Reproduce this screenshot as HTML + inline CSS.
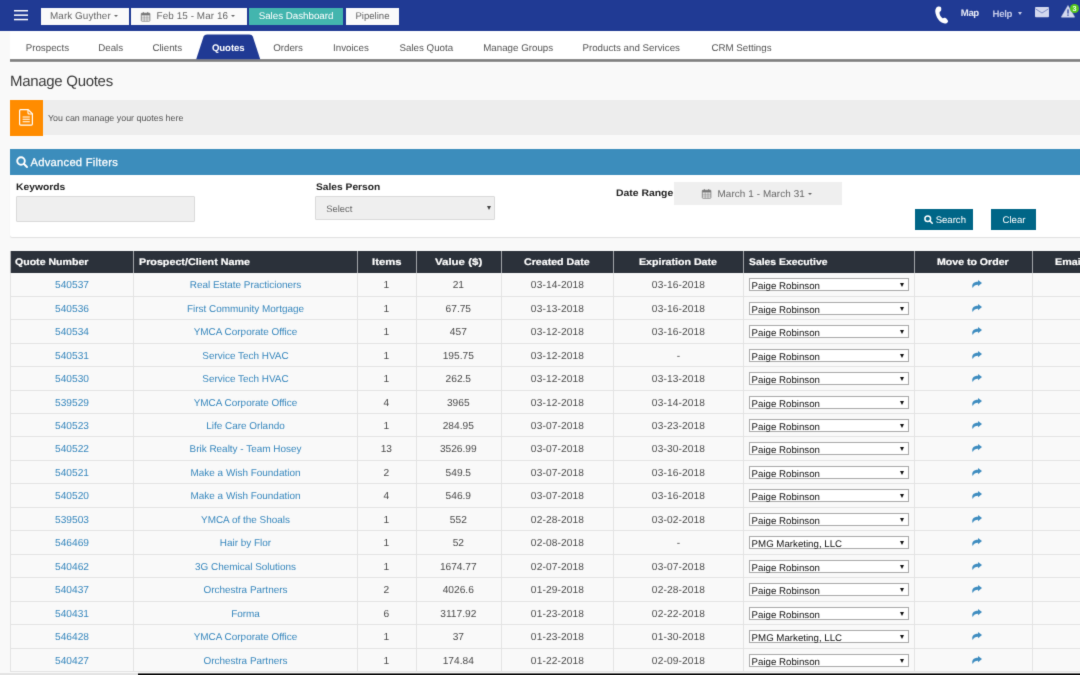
<!DOCTYPE html>
<html><head><meta charset="utf-8"><title>Manage Quotes</title>
<style>
*{box-sizing:border-box;margin:0;padding:0}
html,body{width:1080px;height:675px;overflow:hidden;background:#f9f9f9;font-family:"Liberation Sans",sans-serif;text-rendering:geometricPrecision}
body{position:relative}
.abs{position:absolute}
svg{display:block;overflow:visible}
#topbar{position:absolute;left:0;top:0;width:1080px;height:31px;background:#203a94}
.tb{position:absolute;top:8px;height:16.7px;background:#fafafa;color:#666}
.tt{position:absolute;top:9.2px;height:16.7px;line-height:16.2px;font-size:9.9px;color:#666;white-space:nowrap}
.car{position:absolute;width:0;height:0;border-left:2.7px solid transparent;border-right:2.7px solid transparent;border-top:2.9px solid #666}
#nav{position:absolute;left:10px;top:31px;width:1085px;height:32px;background:#fff}
#navb{position:absolute;left:10px;top:59px;width:1085px;height:3px;background:#808080;border-top:1px solid #8c8c8c;border-bottom:1px solid #969696}
.ni{position:absolute;top:37.8px;height:22px;line-height:22px;font-size:9.75px;color:#555;white-space:nowrap}
h1{position:absolute;left:10px;top:71.9px;font-size:15px;font-weight:normal;color:#3a3a3a;line-height:20px;white-space:nowrap;letter-spacing:-0.3px}
#info{position:absolute;left:42.5px;top:100.2px;width:1050px;height:35.3px;background:#ededed}
#infoic{position:absolute;left:10px;top:100px;width:32.8px;height:35.6px;background:#ff8c00}
#infotx{position:absolute;left:48px;top:110.2px;font-size:8.88px;line-height:16px;color:#555;white-space:nowrap}
#fh{position:absolute;left:10px;top:148.8px;width:1085px;height:26px;background:#3c8dbc}
#fht{position:absolute;left:30.5px;top:154.6px;letter-spacing:0.26px;font-size:11.2px;line-height:16px;color:#fff;white-space:nowrap;-webkit-text-stroke:0.25px #fff}
#fb{position:absolute;left:10px;top:174.5px;width:1085px;height:62.5px;background:#fff;border-radius:0 0 0 2px;box-shadow:0 1px 1px rgba(0,0,0,0.10)}
.lbl{position:absolute;font-weight:bold;font-size:9.6px;color:#222;line-height:12px;white-space:nowrap;transform-origin:0 50%}
.inp{position:absolute;background:#efefef;border:1px solid #dadada;border-radius:1px}
.gt{position:absolute;font-size:9.9px;line-height:12px;color:#666;white-space:nowrap}
.btn{position:absolute;top:208.9px;height:21.2px;background:#006687}
.bt{position:absolute;top:209.7px;height:21.2px;color:#fff;font-size:10px;line-height:21px;white-space:nowrap}
#th{position:absolute;left:10px;top:250.6px;width:1085px;height:22.2px;background:#2b313a}
.h{position:absolute;top:1.5px;height:22.2px;line-height:22.2px;font-weight:bold;font-size:9.5px;color:#fff;white-space:nowrap;transform-origin:0 50%;-webkit-text-stroke:0.2px #fff}
.hs{position:absolute;top:0;width:1px;height:22.2px;background:#a3a6aa}
.vl{position:absolute;top:273px;width:1px;height:399px;background:#e3e3e3}
.hl{position:absolute;left:10px;width:1085px;height:1px;background:#e3e3e3}
.tr{position:absolute;left:0;width:1080px;height:23.5px}
.c{position:absolute;top:2.2px;height:24.4px;line-height:24.4px;font-size:10.2px;letter-spacing:0;color:#4b4b4b;text-align:center;white-space:nowrap}
.lk{color:#3787bd}
.c1{left:11px;width:122px}.c2{left:134px;width:223px;font-size:9.95px;letter-spacing:0}.c3{left:357.3px;width:58px}.c4{left:416.3px;width:84px}
.c5{left:502px;width:111px;letter-spacing:0.12px}.c6{left:614px;width:129px;letter-spacing:0.12px}
.sel{position:absolute;left:749px;top:6px;width:160px;height:13px;background:#fff;border:1px solid #a9a9a9;text-align:left;line-height:10px;font-size:9.7px;color:#111;white-space:nowrap}
.sel span{position:absolute;left:1.6px;top:2.8px}
.sel i{position:absolute;right:3.6px;top:3.9px;width:0;height:0;border-left:2.4px solid transparent;border-right:2.4px solid transparent;border-top:4.2px solid #111}
.share{position:absolute;left:972px;top:8px}
#blackbar{position:absolute;left:138px;top:674px;width:955px;height:12px;background:#050505}
#blackbar2{position:absolute;left:138px;top:673px;width:955px;height:1px;background:#6e6e6e}
#graybar{position:absolute;left:-12px;top:673px;width:150px;height:13px;background:#e4e4e4}
#w{position:absolute;left:-12px;top:-12px;width:1104px;height:699px;background:#f9f9f9;will-change:transform;filter:url(#soft)}
#in{position:absolute;left:12px;top:12px;width:1080px;height:675px}
</style></head><body><svg width="0" height="0" style="position:absolute"><filter id="soft" x="0" y="0" width="100%" height="100%" color-interpolation-filters="sRGB"><feConvolveMatrix order="3" kernelMatrix="0.0114 0.084 0.0114 0.084 0.6184 0.084 0.0114 0.084 0.0114" edgeMode="duplicate" preserveAlpha="true"/></filter></svg><div id="w"><div id="in">
<div class="abs" style="left:-12px;top:-12px;width:1104px;height:43px;background:#203a94"></div>
<div id="topbar">
<svg class="abs" style="left:13.5px;top:10px" width="14" height="11" viewBox="0 0 14 11"><rect x="0" y="0" width="14" height="1.5" fill="#fff"/><rect x="0" y="4.4" width="14" height="1.5" fill="#fff"/><rect x="0" y="8.8" width="14" height="1.5" fill="#fff"/></svg>
<div class="tb" style="left:41px;width:87.8px"></div>
<div class="tt" style="left:50px;letter-spacing:0.08px">Mark Guyther</div><div class="car" style="left:114.2px;top:14.9px"></div>
<div class="tb" style="left:131.4px;width:115.3px"></div>
<svg class="abs" style="left:141.2px;top:12px" width="9.2" height="9.5" viewBox="0 0 92 95"><rect x="3" y="12" width="86" height="80" rx="6" fill="none" stroke="#777" stroke-width="8"/><rect x="3" y="12" width="86" height="22" fill="#777"/><rect x="20" y="0" width="10" height="22" rx="4" fill="#777"/><rect x="62" y="0" width="10" height="22" rx="4" fill="#777"/><path d="M3 52H89M3 70H89M32 34V92M60 34V92" stroke="#777" stroke-width="5"/></svg>
<div class="tt" style="left:156.6px;letter-spacing:0.08px">Feb 15 - Mar 16</div><div class="car" style="left:231.4px;top:14.9px"></div>
<div class="tb" style="left:249.2px;width:93.8px;background:#43b5ae"></div>
<div class="tt" style="left:258.7px;color:#fff;font-size:9.8px;letter-spacing:-0.03px">Sales Dashboard</div>
<div class="tb" style="left:346px;width:52.8px"></div>
<div class="tt" style="left:355.4px;font-size:9.6px">Pipeline</div>
<svg class="abs" style="left:935px;top:6.3px" width="13.33" height="17.78" viewBox="135 85 180 240"><path d="M152 108 C165 92 200 88 214 100 C222 115 222 138 215 152 C207 157 200 160 197 166 C192 192 205 225 237 252 C245 252 258 243 270 243 C290 252 308 270 312 290 C306 308 292 320 268 323 C235 320 200 298 178 265 C155 232 140 190 138 152 C139 135 144 120 152 108 Z" fill="#fff"/></svg>
<div class="abs" style="left:960.8px;top:6.2px;font-size:9.6px;font-weight:bold;color:#e6e9f5;line-height:16px;letter-spacing:-0.4px">Map</div>
<div class="abs" style="left:992.6px;top:6.8px;font-size:9.6px;font-weight:bold;color:#c3c9e8;line-height:16px;letter-spacing:-0.3px">Help</div>
<div class="car" style="left:1017.6px;top:12.2px;border-left-width:2.6px;border-right-width:2.6px;border-top:3px solid #c3c9e8"></div>
<svg class="abs" style="left:1035px;top:6.9px" width="14" height="10.3" viewBox="0 0 140 103"><rect x="0" y="0" width="140" height="103" rx="10" fill="#d3d8ee"/><path d="M4 18 L70 60 L136 18" fill="none" stroke="#5a6db5" stroke-width="7"/></svg>
<svg class="abs" style="left:1060.6px;top:4.8px" width="14" height="12.4" viewBox="0 0 140 124"><path d="M70 4 L136 118 Q138 123 132 123 L8 123 Q2 123 4 118 Z" fill="#d3d8ee" stroke="#d3d8ee" stroke-width="4" stroke-linejoin="round"/><rect x="63" y="44" width="14" height="42" fill="#3a4fa3"/><rect x="63" y="95" width="14" height="13" fill="#3a4fa3"/></svg>
<div class="abs" style="left:1069.6px;top:3.5px;width:9.8px;height:9.8px;border-radius:50%;background:#55c61e"></div>
<div class="abs" style="left:1069.6px;top:3.6px;width:9.8px;height:9.8px;line-height:9.8px;text-align:center;font-size:7.2px;font-weight:bold;color:#f4fff0">3</div>
</div>
<div id="nav"></div><div id="navb"></div>
<svg class="abs" style="left:190px;top:30px" width="80" height="30" viewBox="190 30 80 30"><path d="M196.2 59.2 L203.6 36.6 Q204.4 34.5 207 34.5 L249.4 34.5 Q252 34.5 252.8 36.6 L260.2 59.2 Z" fill="#203a94"/></svg>
<div class="ni" style="left:25.7px">Prospects</div>
<div class="ni" style="left:98.2px">Deals</div>
<div class="ni" style="left:152.4px">Clients</div>
<div class="ni" style="left:212px;color:#fff;font-weight:bold;font-size:9.6px;letter-spacing:-0.1px">Quotes</div>
<div class="ni" style="left:273.2px">Orders</div>
<div class="ni" style="left:333px">Invoices</div>
<div class="ni" style="left:399.5px">Sales Quota</div>
<div class="ni" style="left:483.2px">Manage Groups</div>
<div class="ni" style="left:582.4px">Products and Services</div>
<div class="ni" style="left:711.4px">CRM Settings</div>
<h1>Manage Quotes</h1>
<div id="info"></div><div id="infoic"></div>
<svg class="abs" style="left:19px;top:109.3px" width="14" height="16.7" viewBox="0 0 140 167"><path d="M14 6 H92 L134 48 V150 Q134 161 123 161 H17 Q6 161 6 150 V17 Q6 6 17 6 Z" fill="none" stroke="#fff" stroke-width="12" stroke-linejoin="round"/><path d="M90 8 V40 Q90 50 100 50 H132" fill="none" stroke="#fff" stroke-width="11"/><path d="M36 80 H108 M36 103 H108 M36 127 H108" stroke="#fff" stroke-width="11"/></svg>
<div id="infotx">You can manage your quotes here</div>
<div id="fh"></div>
<svg class="abs" style="left:16px;top:156.2px" width="12" height="12" viewBox="0 0 120 120"><circle cx="50" cy="50" r="38" fill="none" stroke="#fff" stroke-width="19"/><path d="M78 78 L110 110" stroke="#fff" stroke-width="20" stroke-linecap="round"/></svg>
<div id="fht">Advanced Filters</div>
<div id="fb"></div>
<div class="lbl" style="left:16.3px;top:182px;transform:scaleX(1.073)">Keywords</div>
<div class="inp" style="left:16px;top:196px;width:178.8px;height:25.6px"></div>
<div class="lbl" style="left:315.8px;top:182px;transform:scaleX(1.066)">Sales Person</div>
<div class="inp" style="left:315.4px;top:196px;width:179.6px;height:23.6px"></div>
<div class="gt" style="left:326.2px;top:203.2px;font-size:9.4px">Select</div>
<div class="abs" style="left:486.8px;top:205.6px;width:0;height:0;border-left:2.3px solid transparent;border-right:2.3px solid transparent;border-top:4.2px solid #444"></div>
<div class="lbl" style="left:615.8px;top:188.4px;transform:scaleX(1.084)">Date Range</div>
<div class="inp" style="left:674.4px;top:182px;width:167.4px;height:23px;border:none;border-radius:0"></div>
<svg class="abs" style="left:702.4px;top:188.6px" width="9.2" height="9.6" viewBox="0 0 92 95"><rect x="3" y="12" width="86" height="80" rx="6" fill="none" stroke="#777" stroke-width="8"/><rect x="3" y="12" width="86" height="22" fill="#777"/><rect x="20" y="0" width="10" height="22" rx="4" fill="#777"/><rect x="62" y="0" width="10" height="22" rx="4" fill="#777"/><path d="M3 52H89M3 70H89M32 34V92M60 34V92" stroke="#777" stroke-width="5"/></svg>
<div class="gt" style="left:717.5px;top:188.6px;letter-spacing:0.1px">March 1 - March 31</div>
<div class="car" style="left:808.2px;top:192.6px"></div>
<div class="btn" style="left:915px;width:57.9px"></div>
<svg class="abs" style="left:923.8px;top:215.2px" width="9" height="9" viewBox="0 0 120 120"><circle cx="50" cy="50" r="38" fill="none" stroke="#fff" stroke-width="20"/><path d="M78 78 L110 110" stroke="#fff" stroke-width="20" stroke-linecap="round"/></svg>
<div class="bt" style="left:935.7px;font-size:9.55px">Search</div>
<div class="btn" style="left:991px;width:45px"></div>
<div class="bt" style="left:1002.5px;font-size:9.65px">Clear</div>
<div id="th">
<div class="hs" style="left:0;background:#b4b6b9"></div><div class="hs" style="left:123px"></div><div class="hs" style="left:347px"></div><div class="hs" style="left:406px"></div><div class="hs" style="left:491px"></div><div class="hs" style="left:603px"></div><div class="hs" style="left:733px"></div><div class="hs" style="left:904px"></div><div class="hs" style="left:1022px"></div>
<div class="h" style="left:5.4px;transform:scaleX(1.112)">Quote Number</div>
<div class="h" style="left:128.5px;transform:scaleX(1.13)">Prospect/Client Name</div>
<div class="h" style="left:361.7px;transform:scaleX(1.186)">Items</div>
<div class="h" style="left:424.9px;transform:scaleX(1.209)">Value ($)</div>
<div class="h" style="left:514.4px;transform:scaleX(1.119)">Created Date</div>
<div class="h" style="left:629px;transform:scaleX(1.119)">Expiration Date</div>
<div class="h" style="left:738.6px;transform:scaleX(1.092)">Sales Executive</div>
<div class="h" style="left:927.4px;transform:scaleX(1.112)">Move to Order</div>
<div class="h" style="left:1045px;transform:scaleX(1.128)">Email</div>
</div>
<div class="vl" style="left:10px"></div>
<div class="vl" style="left:133px"></div>
<div class="vl" style="left:357px"></div>
<div class="vl" style="left:416px"></div>
<div class="vl" style="left:501px"></div>
<div class="vl" style="left:613px"></div>
<div class="vl" style="left:743px"></div>
<div class="vl" style="left:914px"></div>
<div class="vl" style="left:1032px"></div>
<div class="hl" style="top:296px"></div>
<div class="hl" style="top:319px"></div>
<div class="hl" style="top:343px"></div>
<div class="hl" style="top:366px"></div>
<div class="hl" style="top:390px"></div>
<div class="hl" style="top:413px"></div>
<div class="hl" style="top:436px"></div>
<div class="hl" style="top:460px"></div>
<div class="hl" style="top:483px"></div>
<div class="hl" style="top:507px"></div>
<div class="hl" style="top:530px"></div>
<div class="hl" style="top:554px"></div>
<div class="hl" style="top:577px"></div>
<div class="hl" style="top:601px"></div>
<div class="hl" style="top:624px"></div>
<div class="hl" style="top:648px"></div>
<div class="hl" style="top:671px"></div>
<div class="tr" style="top:272px"><div class="c c1 lk">540537</div><div class="c c2 lk">Real Estate Practicioners</div><div class="c c3">1</div><div class="c c4">21</div><div class="c c5">03-14-2018</div><div class="c c6">03-16-2018</div><div class="sel"><span>Paige Robinson</span><i></i></div><svg class="share" viewBox="0 0 20 16" width="10" height="8"><path d="M12 0 L20 6.2 L12 12.4 L12 9.3 C7.5 9.1 3.6 10.8 1.4 16 C-1.6 8.4 3 3.4 12 3.4 Z" fill="#3f8dc0"/></svg></div>
<div class="tr" style="top:296px"><div class="c c1 lk">540536</div><div class="c c2 lk">First Community Mortgage</div><div class="c c3">1</div><div class="c c4">67.75</div><div class="c c5">03-13-2018</div><div class="c c6">03-16-2018</div><div class="sel"><span>Paige Robinson</span><i></i></div><svg class="share" viewBox="0 0 20 16" width="10" height="8"><path d="M12 0 L20 6.2 L12 12.4 L12 9.3 C7.5 9.1 3.6 10.8 1.4 16 C-1.6 8.4 3 3.4 12 3.4 Z" fill="#3f8dc0"/></svg></div>
<div class="tr" style="top:319px"><div class="c c1 lk">540534</div><div class="c c2 lk">YMCA Corporate Office</div><div class="c c3">1</div><div class="c c4">457</div><div class="c c5">03-12-2018</div><div class="c c6">03-16-2018</div><div class="sel"><span>Paige Robinson</span><i></i></div><svg class="share" viewBox="0 0 20 16" width="10" height="8"><path d="M12 0 L20 6.2 L12 12.4 L12 9.3 C7.5 9.1 3.6 10.8 1.4 16 C-1.6 8.4 3 3.4 12 3.4 Z" fill="#3f8dc0"/></svg></div>
<div class="tr" style="top:343px"><div class="c c1 lk">540531</div><div class="c c2 lk">Service Tech HVAC</div><div class="c c3">1</div><div class="c c4">195.75</div><div class="c c5">03-12-2018</div><div class="c c6">-</div><div class="sel"><span>Paige Robinson</span><i></i></div><svg class="share" viewBox="0 0 20 16" width="10" height="8"><path d="M12 0 L20 6.2 L12 12.4 L12 9.3 C7.5 9.1 3.6 10.8 1.4 16 C-1.6 8.4 3 3.4 12 3.4 Z" fill="#3f8dc0"/></svg></div>
<div class="tr" style="top:366px"><div class="c c1 lk">540530</div><div class="c c2 lk">Service Tech HVAC</div><div class="c c3">1</div><div class="c c4">262.5</div><div class="c c5">03-12-2018</div><div class="c c6">03-13-2018</div><div class="sel"><span>Paige Robinson</span><i></i></div><svg class="share" viewBox="0 0 20 16" width="10" height="8"><path d="M12 0 L20 6.2 L12 12.4 L12 9.3 C7.5 9.1 3.6 10.8 1.4 16 C-1.6 8.4 3 3.4 12 3.4 Z" fill="#3f8dc0"/></svg></div>
<div class="tr" style="top:390px"><div class="c c1 lk">539529</div><div class="c c2 lk">YMCA Corporate Office</div><div class="c c3">4</div><div class="c c4">3965</div><div class="c c5">03-12-2018</div><div class="c c6">03-14-2018</div><div class="sel"><span>Paige Robinson</span><i></i></div><svg class="share" viewBox="0 0 20 16" width="10" height="8"><path d="M12 0 L20 6.2 L12 12.4 L12 9.3 C7.5 9.1 3.6 10.8 1.4 16 C-1.6 8.4 3 3.4 12 3.4 Z" fill="#3f8dc0"/></svg></div>
<div class="tr" style="top:413px"><div class="c c1 lk">540523</div><div class="c c2 lk">Life Care Orlando</div><div class="c c3">1</div><div class="c c4">284.95</div><div class="c c5">03-07-2018</div><div class="c c6">03-23-2018</div><div class="sel"><span>Paige Robinson</span><i></i></div><svg class="share" viewBox="0 0 20 16" width="10" height="8"><path d="M12 0 L20 6.2 L12 12.4 L12 9.3 C7.5 9.1 3.6 10.8 1.4 16 C-1.6 8.4 3 3.4 12 3.4 Z" fill="#3f8dc0"/></svg></div>
<div class="tr" style="top:436px"><div class="c c1 lk">540522</div><div class="c c2 lk">Brik Realty - Team Hosey</div><div class="c c3">13</div><div class="c c4">3526.99</div><div class="c c5">03-07-2018</div><div class="c c6">03-30-2018</div><div class="sel"><span>Paige Robinson</span><i></i></div><svg class="share" viewBox="0 0 20 16" width="10" height="8"><path d="M12 0 L20 6.2 L12 12.4 L12 9.3 C7.5 9.1 3.6 10.8 1.4 16 C-1.6 8.4 3 3.4 12 3.4 Z" fill="#3f8dc0"/></svg></div>
<div class="tr" style="top:460px"><div class="c c1 lk">540521</div><div class="c c2 lk">Make a Wish Foundation</div><div class="c c3">2</div><div class="c c4">549.5</div><div class="c c5">03-07-2018</div><div class="c c6">03-16-2018</div><div class="sel"><span>Paige Robinson</span><i></i></div><svg class="share" viewBox="0 0 20 16" width="10" height="8"><path d="M12 0 L20 6.2 L12 12.4 L12 9.3 C7.5 9.1 3.6 10.8 1.4 16 C-1.6 8.4 3 3.4 12 3.4 Z" fill="#3f8dc0"/></svg></div>
<div class="tr" style="top:483px"><div class="c c1 lk">540520</div><div class="c c2 lk">Make a Wish Foundation</div><div class="c c3">4</div><div class="c c4">546.9</div><div class="c c5">03-07-2018</div><div class="c c6">03-16-2018</div><div class="sel"><span>Paige Robinson</span><i></i></div><svg class="share" viewBox="0 0 20 16" width="10" height="8"><path d="M12 0 L20 6.2 L12 12.4 L12 9.3 C7.5 9.1 3.6 10.8 1.4 16 C-1.6 8.4 3 3.4 12 3.4 Z" fill="#3f8dc0"/></svg></div>
<div class="tr" style="top:507px"><div class="c c1 lk">539503</div><div class="c c2 lk">YMCA of the Shoals</div><div class="c c3">1</div><div class="c c4">552</div><div class="c c5">02-28-2018</div><div class="c c6">03-02-2018</div><div class="sel"><span>Paige Robinson</span><i></i></div><svg class="share" viewBox="0 0 20 16" width="10" height="8"><path d="M12 0 L20 6.2 L12 12.4 L12 9.3 C7.5 9.1 3.6 10.8 1.4 16 C-1.6 8.4 3 3.4 12 3.4 Z" fill="#3f8dc0"/></svg></div>
<div class="tr" style="top:530px"><div class="c c1 lk">546469</div><div class="c c2 lk">Hair by Flor</div><div class="c c3">1</div><div class="c c4">52</div><div class="c c5">02-08-2018</div><div class="c c6">-</div><div class="sel"><span>PMG Marketing, LLC</span><i></i></div><svg class="share" viewBox="0 0 20 16" width="10" height="8"><path d="M12 0 L20 6.2 L12 12.4 L12 9.3 C7.5 9.1 3.6 10.8 1.4 16 C-1.6 8.4 3 3.4 12 3.4 Z" fill="#3f8dc0"/></svg></div>
<div class="tr" style="top:554px"><div class="c c1 lk">540462</div><div class="c c2 lk">3G Chemical Solutions</div><div class="c c3">1</div><div class="c c4">1674.77</div><div class="c c5">02-07-2018</div><div class="c c6">03-07-2018</div><div class="sel"><span>Paige Robinson</span><i></i></div><svg class="share" viewBox="0 0 20 16" width="10" height="8"><path d="M12 0 L20 6.2 L12 12.4 L12 9.3 C7.5 9.1 3.6 10.8 1.4 16 C-1.6 8.4 3 3.4 12 3.4 Z" fill="#3f8dc0"/></svg></div>
<div class="tr" style="top:577px"><div class="c c1 lk">540437</div><div class="c c2 lk">Orchestra Partners</div><div class="c c3">2</div><div class="c c4">4026.6</div><div class="c c5">01-29-2018</div><div class="c c6">02-28-2018</div><div class="sel"><span>Paige Robinson</span><i></i></div><svg class="share" viewBox="0 0 20 16" width="10" height="8"><path d="M12 0 L20 6.2 L12 12.4 L12 9.3 C7.5 9.1 3.6 10.8 1.4 16 C-1.6 8.4 3 3.4 12 3.4 Z" fill="#3f8dc0"/></svg></div>
<div class="tr" style="top:601px"><div class="c c1 lk">540431</div><div class="c c2 lk">Forma</div><div class="c c3">6</div><div class="c c4">3117.92</div><div class="c c5">01-23-2018</div><div class="c c6">02-22-2018</div><div class="sel"><span>Paige Robinson</span><i></i></div><svg class="share" viewBox="0 0 20 16" width="10" height="8"><path d="M12 0 L20 6.2 L12 12.4 L12 9.3 C7.5 9.1 3.6 10.8 1.4 16 C-1.6 8.4 3 3.4 12 3.4 Z" fill="#3f8dc0"/></svg></div>
<div class="tr" style="top:624px"><div class="c c1 lk">546428</div><div class="c c2 lk">YMCA Corporate Office</div><div class="c c3">1</div><div class="c c4">37</div><div class="c c5">01-23-2018</div><div class="c c6">01-30-2018</div><div class="sel"><span>PMG Marketing, LLC</span><i></i></div><svg class="share" viewBox="0 0 20 16" width="10" height="8"><path d="M12 0 L20 6.2 L12 12.4 L12 9.3 C7.5 9.1 3.6 10.8 1.4 16 C-1.6 8.4 3 3.4 12 3.4 Z" fill="#3f8dc0"/></svg></div>
<div class="tr" style="top:648px"><div class="c c1 lk">540427</div><div class="c c2 lk">Orchestra Partners</div><div class="c c3">1</div><div class="c c4">174.84</div><div class="c c5">01-22-2018</div><div class="c c6">02-09-2018</div><div class="sel"><span>Paige Robinson</span><i></i></div><svg class="share" viewBox="0 0 20 16" width="10" height="8"><path d="M12 0 L20 6.2 L12 12.4 L12 9.3 C7.5 9.1 3.6 10.8 1.4 16 C-1.6 8.4 3 3.4 12 3.4 Z" fill="#3f8dc0"/></svg></div>
<div id="graybar"></div><div id="blackbar2"></div><div id="blackbar"></div>
</div></div></body></html>
